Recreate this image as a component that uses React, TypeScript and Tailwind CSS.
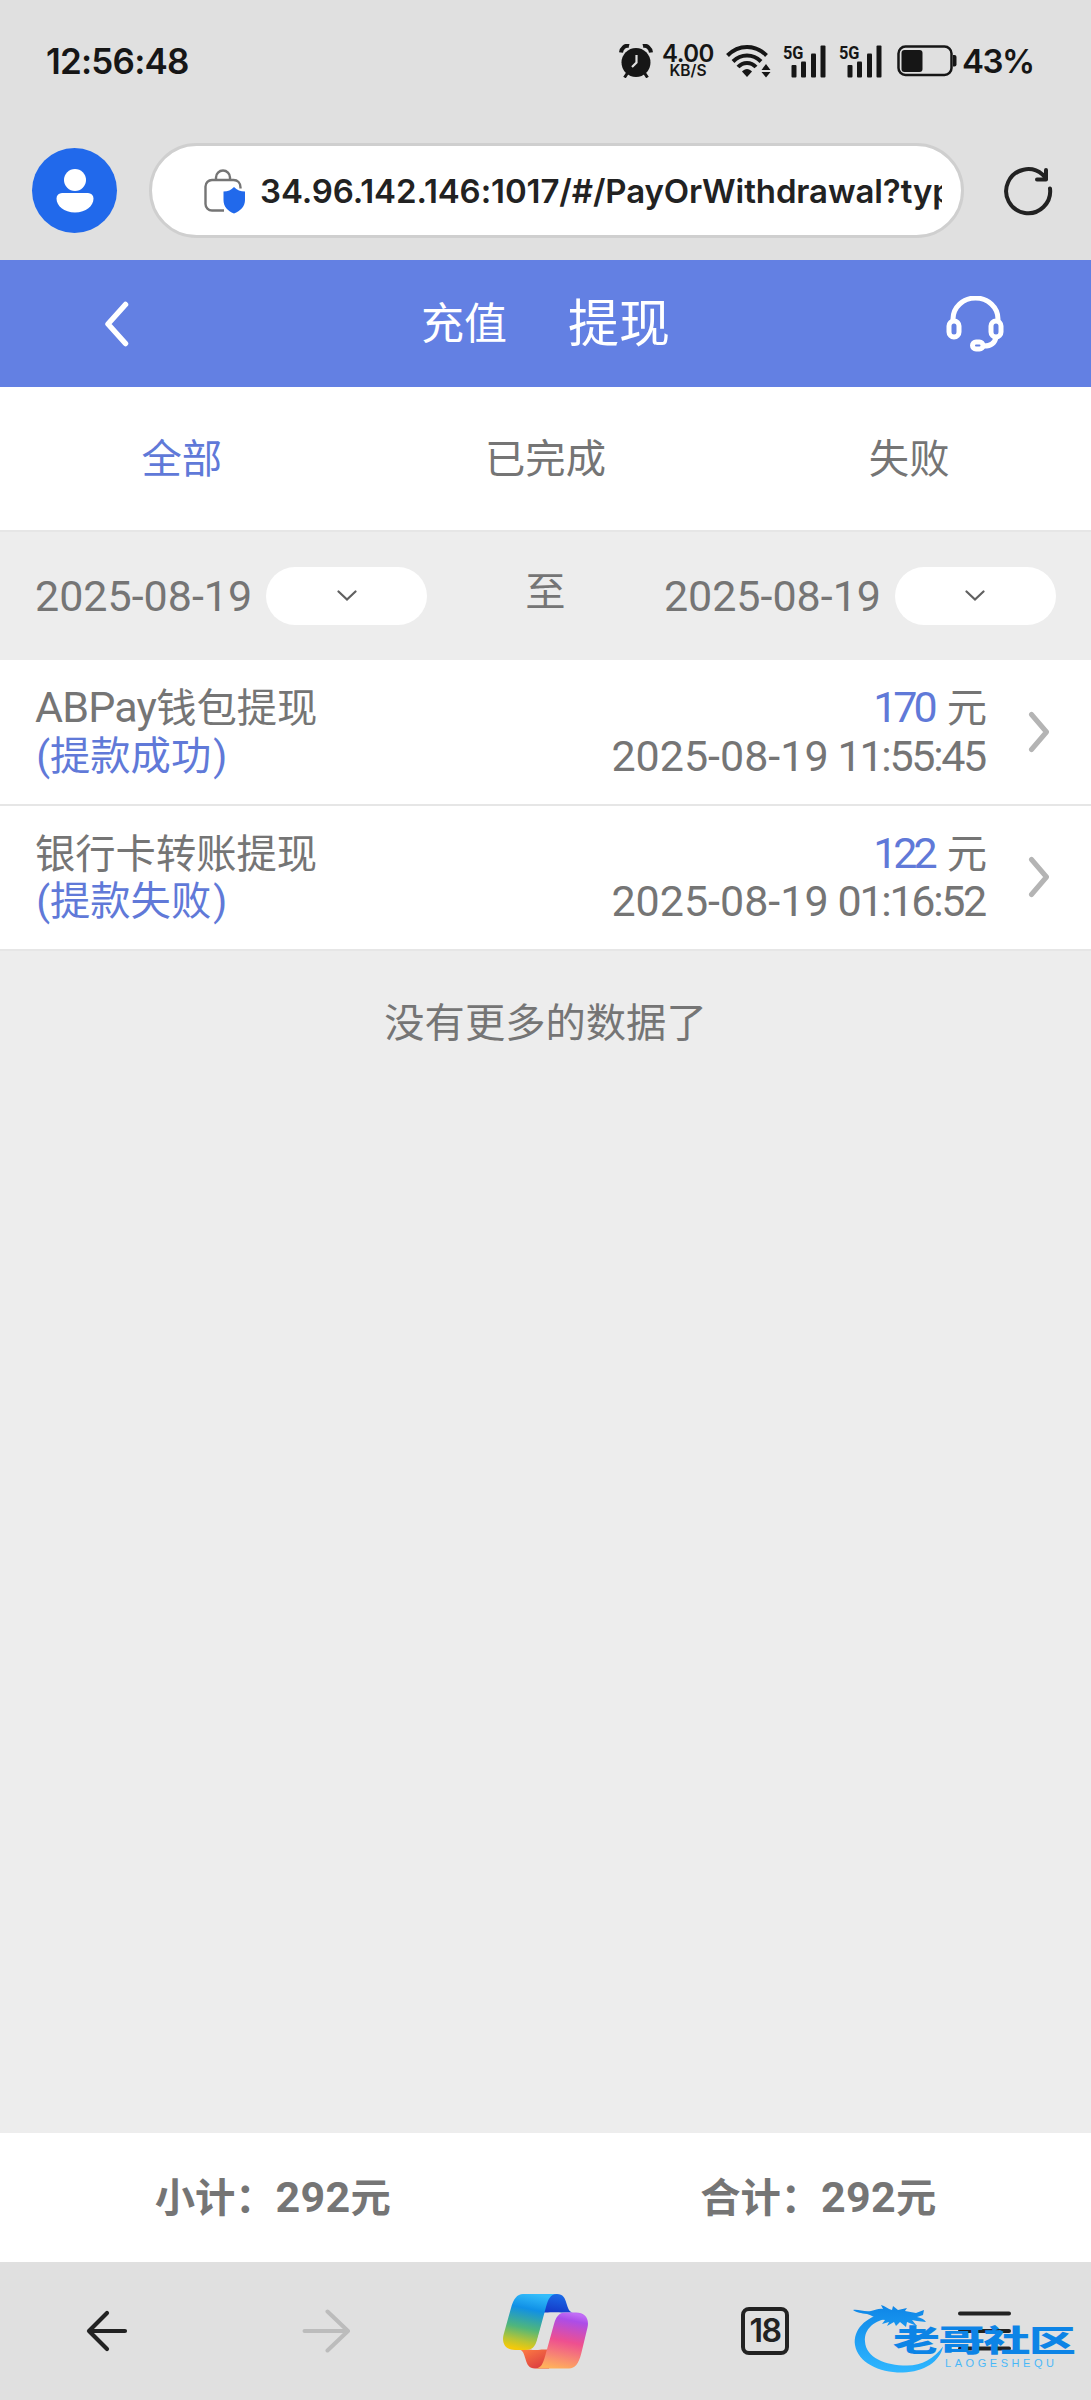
import type { ReactNode } from "react";

const TABS = ["全部", "已完成", "失败"];

const RECORDS = [
  { prefix: "ABPay", title: "钱包提现", status: "提款成功", amount: "170", date: "2025-08-19", time: "11:55:45" },
  { prefix: "", title: "银行卡转账提现", status: "提款失败", amount: "122", date: "2025-08-19", time: "01:16:52" },
];

// Latin letters and digits are set a little larger than the Chinese around them
function Num({ children, className = "" }: { children: ReactNode; className?: string }) {
  return <span className={`text-[43px] ${className}`}>{children}</span>;
}

function AlarmIcon() {
  return (
    <svg width="34" height="34" viewBox="0 0 34 34" fill="none" stroke="#161616">
      <circle cx="17" cy="18.5" r="14.5" fill="#161616" stroke="none" />
      <path d="M2 8.500C2.500 4 6 1 10 2" strokeWidth="4" />
      <path d="M32 8.500C31.500 4 28 1 24 2" strokeWidth="4" />
      <path d="M8.500 29l-3 4.500M25.500 29l3 4.500" strokeWidth="3" />
      <path d="M17.500 11v7.500L13 23" stroke="#e0e0e0" strokeWidth="2.200" />
    </svg>
  );
}

function WifiIcon() {
  return (
    <svg width="45" height="34" viewBox="0 0 45 34" fill="none" stroke="#161616" strokeWidth="4">
      <path d="M1.500 11.500C12.500 0 29.500 0 40.500 11.500" />
      <path d="M7 17.500c8-8 20-8 28 0" />
      <path d="M12 23c5-5.500 13-5.500 18 0" />
      <path d="M16 27.500c3-3.500 7-3.500 10 0L21 33z" fill="#161616" stroke="none" />
      <path d="M35.500 26l4.500-6 4.500 6zM35.500 28l4.500 5.500 4.500-5.500z" fill="#161616" stroke="none" />
    </svg>
  );
}

function SignalIcon() {
  return (
    <svg className="overflow-visible" width="43" height="34" viewBox="0 0 43 34" fill="#161616">
      <text x="0" y="14.500" fontFamily="Roboto, sans-serif" fontSize="19" fontWeight="700" textLength="20.500" lengthAdjust="spacingAndGlyphs">
        5G
      </text>
      <rect x="8.500" y="21" width="5" height="12.500" rx="1" />
      <rect x="18" y="17.500" width="5" height="16" rx="1" />
      <rect x="28" y="9.500" width="5" height="24" rx="1" />
      <rect x="37.500" y="1.500" width="5" height="32" rx="1" />
    </svg>
  );
}

function BatteryIcon() {
  return (
    <svg width="60" height="32" viewBox="0 0 60 32" fill="none">
      <rect x="1.500" y="1.500" width="53" height="28.500" rx="7" stroke="#161616" strokeWidth="2.500" />
      <rect x="4.500" y="5" width="21" height="22" rx="3" fill="#161616" />
      <path d="M56 10h1.500a2 2 0 0 1 2 2v7.500a2 2 0 0 1-2 2H56z" fill="#161616" />
    </svg>
  );
}

function StatusBar() {
  return (
    <div className="flex h-[122px] shrink-0 items-center justify-between pl-[46px] pr-[59px] font-[Inter,sans-serif] text-[#161616]">
      <span className="text-[35px] leading-none font-semibold tracking-[-0.8px]">12:56:48</span>
      <div className="flex items-center">
        <AlarmIcon />
        <div className="ml-[8px] mr-px flex w-[54px] flex-col items-center font-semibold">
          <span className="text-[24px] leading-[19px] tracking-[-0.5px]">4.00</span>
          <span className="text-[15.500px] leading-[15px]">KB/S</span>
        </div>
        <div className="ml-[10px]"><WifiIcon /></div>
        <div className="ml-[12px]"><SignalIcon /></div>
        <div className="ml-[13px]"><SignalIcon /></div>
        <div className="ml-[15px]"><BatteryIcon /></div>
        <span className="ml-[5px] w-[70px] text-[33px] leading-none font-semibold tracking-[-1.500px]">43%</span>
      </div>
    </div>
  );
}

function AddressBar() {
  return (
    <div className="flex h-[138px] shrink-0 items-center pb-px pl-[32px] pr-[38px]">
      <div className="flex size-[85px] items-center justify-center rounded-full bg-[#2169eb]">
        <svg width="38" height="44" viewBox="0 0 38 44" fill="#fff">
          <circle cx="19" cy="11" r="11" />
          <path d="M6 24h26a5.500 5.500 0 0 1 5.500 5.500C37.500 37 30 43.500 19 43.500S.5 37 .5 29.500A5.500 5.500 0 0 1 6 24z" />
        </svg>
      </div>
      <div className="ml-[32px] flex h-[95px] w-[815px] items-center rounded-full border-[3px] border-[#cfcfcf] bg-white pl-[52px]">
        <svg width="42" height="46" viewBox="0 0 42 46" fill="none" stroke="#757575" strokeWidth="2.400">
          <path d="M12 12V9.500a7 7 0 0 1 14 0V12" />
          <path d="M36.500 20.500v-1c0-4.500-3-7.500-7-7.500H8a6.500 6.500 0 0 0-6.500 6.500V36A6.500 6.500 0 0 0 8 42.500h12" />
          <path d="M30 19c3 3 6.500 4.500 11 4.500V32c0 6.500-4.500 11-11 13.500C23.500 43 19.500 38.500 19.500 32v-8.500C24 23.500 27 22 30 19z" fill="#2169eb" stroke="none" />
        </svg>
        <div className="ml-[14px] w-[682px] overflow-hidden pt-[3px] font-[Inter,sans-serif] text-[33px] font-semibold tracking-[-0.1px] whitespace-nowrap text-[#222]">
          34.96.142.146:1017/#/PayOrWithdrawal?type
        </div>
      </div>
      <svg className="ml-[39px]" width="50" height="50" viewBox="0 0 50 50" fill="none" stroke="#222" strokeWidth="4" strokeLinecap="round" strokeLinejoin="round">
        <path d="M47 22.500A22 22 0 1 1 39.500 8.500l3.500 4" />
        <path d="M43 4v9.500h-9" />
      </svg>
    </div>
  );
}

function PageHeader() {
  return (
    <header className="flex h-[127px] shrink-0 items-center bg-[#6380e3] text-white">
      <svg className="ml-[103px]" width="26" height="46" viewBox="0 0 26 46" fill="none" stroke="currentColor" strokeWidth="5.500" strokeLinecap="round" strokeLinejoin="round">
        <path d="M22.500 3.500L5 23l17.500 19.500" />
      </svg>
      <div className="ml-[292px] flex w-[249px] items-center justify-between pt-[2px]">
        <span className="text-[43px] leading-none">充值</span>
        <span className="text-[51px] leading-none">提现</span>
      </div>
      <svg className="ml-[275px]" width="60" height="56" viewBox="0 0 60 56" fill="none" stroke="currentColor" strokeWidth="5">
        <path d="M8 25V23a22.500 21 0 0 1 45 0v2" />
        <rect x="4" y="25" width="10" height="16" rx="5" />
        <rect x="46" y="25" width="10" height="16" rx="5" />
        <path d="M51 41c-1 6-5 9-12 9" />
        <rect x="27.500" y="46" width="10.500" height="7" rx="3.500" />
      </svg>
    </header>
  );
}

function DatePicker({ value }: { value: string }) {
  return (
    <div className="flex items-center justify-between">
      <Num className="leading-none">{value}</Num>
      <button className="ml-[14px] flex h-[58px] w-[161px] items-center justify-center rounded-full bg-white">
        <svg width="20" height="12" viewBox="0 0 20 12" fill="none" stroke="#606060" strokeWidth="2.200" strokeLinecap="round">
          <path d="M1.500 1.500L10 9.500l8.500-8" />
        </svg>
      </button>
    </div>
  );
}

function RecordRow({ record }: { record: (typeof RECORDS)[number] }) {
  return (
    <div className="flex h-[145.500px] items-center border-b-[2px] border-[#e6e6e6] bg-white pr-[40px] pl-[35px] leading-[48.500px]">
      <div className="flex flex-col">
        <div className="flex h-[48.500px] items-center">
          {record.prefix && <Num className="tracking-[-0.8px]">{record.prefix}</Num>}
          <span className="pt-[4px]">{record.title}</span>
        </div>
        <div className="flex h-[48.500px] items-center pt-[2px] text-[#6079d8]">
          <span className="w-[15px] text-right">(</span>
          {record.status}
          <span className="ml-[2px]">)</span>
        </div>
      </div>
      <div className="ml-auto flex flex-col items-end">
        <div className="flex h-[48.500px] items-center">
          <Num className="tracking-[-4px] text-[#6079d8]">{record.amount}</Num>
          <span className="ml-[13px] pt-[4px]">元</span>
        </div>
        <div className="mr-[2px] flex h-[48.500px] items-center">
          <Num>{record.date}</Num>
          <Num className="ml-[9px] tracking-[-2.3px]">{record.time}</Num>
        </div>
      </div>
      <svg className="ml-[41px]" width="23" height="42" viewBox="0 0 23 42" fill="none" stroke="#b4b4b4" strokeWidth="5" strokeLinecap="round" strokeLinejoin="round">
        <path d="M3.500 3.500L18.500 21l-15 17.500" />
      </svg>
    </div>
  );
}

function CopilotIcon() {
  return (
    <svg width="86" height="75" viewBox="0 0 86 75">
      <defs>
        <linearGradient id="cpLeft" x1="0.6" y1="0" x2="0.400" y2="1">
          <stop offset="0" stopColor="#33bdfb" />
          <stop offset="0.280" stopColor="#1090e6" />
          <stop offset="0.620" stopColor="#4fb67c" />
          <stop offset="0.850" stopColor="#b8c534" />
          <stop offset="1" stopColor="#f3c90a" />
        </linearGradient>
        <linearGradient id="cpTop" x1="0.600" y1="0" x2="0.300" y2="1">
          <stop offset="0" stopColor="#1b6ce8" />
          <stop offset="1" stopColor="#1439c8" />
        </linearGradient>
        <linearGradient id="cpRight" x1="0.600" y1="0" x2="0.400" y2="1">
          <stop offset="0" stopColor="#c06cf5" />
          <stop offset="0.120" stopColor="#ac4de8" />
          <stop offset="0.500" stopColor="#ee4f90" />
          <stop offset="1" stopColor="#ffb05c" />
        </linearGradient>
        <linearGradient id="cpBottom" x1="0" y1="0" x2="0.800" y2="1">
          <stop offset="0" stopColor="#ff7f43" />
          <stop offset="1" stopColor="#d93840" />
        </linearGradient>
      </defs>
      <path d="M38 0h16c6 0 8 4 9.500 9.500 1.500 5 3 9 6.500 9H40z" fill="url(#cpTop)" />
      <path d="M46 74.500H32c-6 0-8-4-9.500-9.500-1.500-5-2.500-9-6.500-9.500h32z" fill="url(#cpBottom)" />
      <path d="M20 0h34c-7 0-9 6-11 13L34 46c-2 7-5 10-12 10H12C3 56-1.500 50 .5 41L8 14C10.500 5 14 0 20 0z" fill="url(#cpLeft)" />
      <path d="M66 74.500H32c6 0 8-5 10-12L51 30c2-7 5-11.500 11-11.500h11c9 0 13.500 6 11.500 15L78 60.500C75.500 69.500 72 74.500 66 74.500z" fill="url(#cpRight)" />
      <path d="M41.500 22q2-3.500 6-3.500h11c-5 0-6.500 5-8.500 11l-6 18c-2 6-5 8.500-11 8.500h-7c4 0 6.500-3 7.500-7z" fill="#e0e0e0" />
    </svg>
  );
}

function Watermark() {
  return (
    <svg className="absolute top-[-22px] left-[-108px]" width="228" height="88" viewBox="0 0 228 88" fill="url(#wm)">
      <defs>
        <linearGradient id="wm" gradientUnits="userSpaceOnUse" x1="0" y1="14" x2="0" y2="82">
          <stop offset="0" stopColor="#0d84e6" />
          <stop offset="1" stopColor="#2fb6ff" />
        </linearGradient>
      </defs>
      {/* dragon curled round the name */}
      <path d="M35 24C15 28 3 41 5 56c3 18 25 28 48 27.500 21-.5 37-11 40-26-9 12-21 19-36 19-22 0-41-8-42-24C14 40 24 31 41 29z" />
      <path d="M3 21c5-1 11 2 18 1 5-1 8-3 12-2l-2-4c4 1 7 4 11 5l1-4 5 4 9-2-2 3 11 2 8-3-1 5-6 2c4 1 7 2 9 5l-9-1-5-1 5 6-10-4-1 5-6-5-4 4-2-4-7 4 2-4-7 2 3-4C24 29 21 26 17 25c-6-1-10-1-14-4z" />
      <text x="0" y="0" transform="translate(43 62) scale(1.590 1)" fontFamily="'Noto Sans CJK SC', sans-serif" fontWeight="900" fontSize="29.500" textLength="115">
        老哥社区
      </text>
      <text x="95" y="78" fontFamily="'Liberation Sans', sans-serif" fontSize="11" textLength="109" opacity="0.850">
        LAOGESHEQU
      </text>
    </svg>
  );
}

function BrowserToolbar() {
  return (
    <nav className="flex h-[138px] shrink-0 items-center bg-[#e0e0e0]">
      <svg className="ml-[86px]" width="42" height="42" viewBox="0 0 42 42" fill="none" stroke="#222" strokeWidth="4.200" strokeLinecap="round" strokeLinejoin="round">
        <path d="M39 21H3M21 3L3 21l18 18" />
      </svg>
      <svg className="ml-[173px]" width="50" height="44" viewBox="0 0 50 44" fill="none" stroke="#bcbcbc" strokeWidth="4" strokeLinecap="round" strokeLinejoin="round">
        <path d="M3.500 22h43M26.500 2.500L47 22 26.500 41.500" />
      </svg>
      <div className="ml-[152px]"><CopilotIcon /></div>
      <div className="ml-[152px] flex size-[48px] items-center justify-center rounded-[8px] border-4 border-[#222] font-[Inter,sans-serif] text-[32px] leading-none font-semibold tracking-[-1.500px] text-[#222]">
        18
      </div>
      <div className="relative ml-[169px]">
        <svg width="53" height="40" viewBox="0 0 53 40" stroke="#222" strokeWidth="4" strokeLinecap="round">
          <path d="M2 2.500h49M2 20h49M2 37.500h49" />
        </svg>
        <Watermark />
      </div>
    </nav>
  );
}

export default function App() {
  return (
    <div className="flex h-[2400px] w-[1091px] flex-col overflow-hidden bg-[#e0e0e0] font-[Roboto,'Noto_Sans_CJK_SC',sans-serif] text-[40.300px] text-[#757575]">
      <StatusBar />
      <AddressBar />
      <PageHeader />
      <main className="flex min-h-0 flex-1 flex-col bg-[#ededed]">
        <div className="grid h-[145px] shrink-0 grid-cols-3 items-center border-b-2 border-[#e6e6e6] bg-white pt-[4px] text-center leading-none">
          {TABS.map((tab, i) => (
            <span key={tab} className={i === 0 ? "text-[#6079d8]" : ""}>{tab}</span>
          ))}
        </div>
        <div className="flex h-[128px] shrink-0 items-center justify-between px-[35px]">
          <DatePicker value="2025-08-19" />
          <span className="pb-[6px] leading-none">至</span>
          <DatePicker value="2025-08-19" />
        </div>
        {RECORDS.map((record) => (
          <RecordRow key={record.time} record={record} />
        ))}
        <p className="mt-[44px] text-center leading-[58px]">没有更多的数据了</p>
      </main>
      <footer className="grid h-[129px] shrink-0 grid-cols-2 items-center bg-white text-center font-bold">
        <span>小计：<Num className="tracking-[0.3px]">292</Num>元</span>
        <span>合计：<Num className="tracking-[0.3px]">292</Num>元</span>
      </footer>
      <BrowserToolbar />
    </div>
  );
}
